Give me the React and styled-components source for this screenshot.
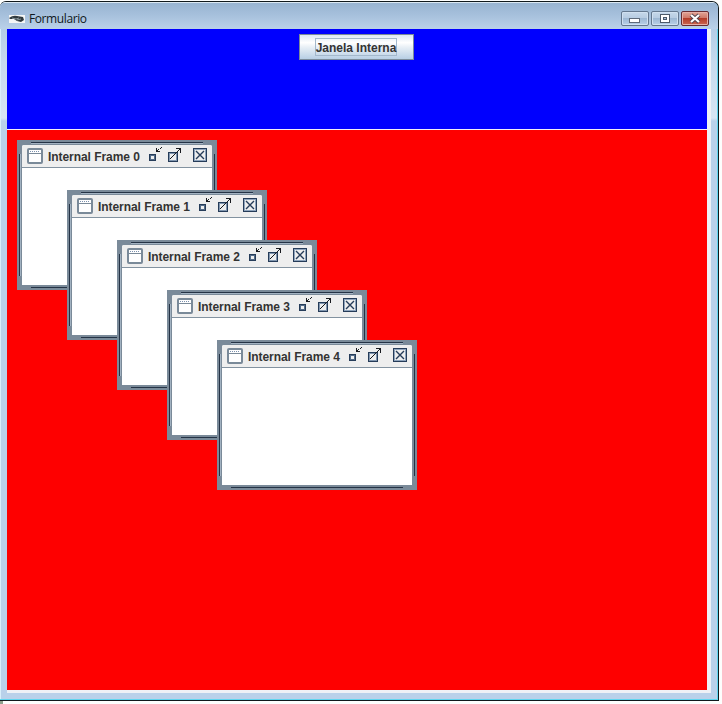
import React from "react";
import styled, { createGlobalStyle } from "styled-components";

const GlobalStyle = createGlobalStyle`
  * { box-sizing: border-box; }
  body { margin: 0; background: #fff; overflow: hidden; }
`;

const Screen = styled.div`
  width: 722px;
  height: 704px;
  padding-top: 1px;
  background: linear-gradient(90deg, #8fa08c 3px, transparent 3px) 0 701px / 100% 3px no-repeat #fdfefd;
`;

const Window = styled.div`
  display: flex;
  flex-direction: column;
  width: 719px;
  height: 700px;
  border: solid #10191c;
  border-width: 1px 1px 1px 0;
  border-radius: 6px 7px 0 0;
  background: linear-gradient(#9bb6d2, #b3cce6 26px, #c6daee 60px, #d6e5f3 116px, #b9d1ea 119px);
  box-shadow: inset -1px -1px #5fd5ef, inset 1px 1px #d9eefa;
`;

const TitleBar = styled.header`
  display: flex;
  align-items: center;
  flex: none;
  height: 27px;
  padding: 6px 9px 0 8px;
  border-radius: 6px 6px 0 0;
  background: linear-gradient(#dbe8f2 0 1px, #98b4d1 1px, #a5bfdb 12px, #b9d0e8 26px);
`;

const Caption = styled.span`
  flex: 1;
  margin-left: 3px;
  font: 12px/16px "Open Sans", "Noto Sans", sans-serif;
  letter-spacing: -0.4px;
  color: #101820;
`;

const WindowButtons = styled.div`
  display: flex;
  gap: 2px;
  margin-bottom: 1px;
`;

const WindowButton = styled.button`
  display: grid;
  place-items: center;
  width: 28px;
  height: 15px;
  padding: 0;
  border: 1px solid ${(p) => (p.$close ? "#672c32" : "#64788f")};
  border-radius: 2px;
  background: ${(p) =>
    p.$close
      ? "linear-gradient(#e2a496, #cf7868 45%, #b43d29 50%, #cb6551)"
      : "linear-gradient(#c6d8ea, #b7cce2 45%, #9eb8d3 50%, #b8d0e8)"};
  box-shadow: inset 0 0 0 1px ${(p) => (p.$close ? "#e6afa5" : "#d0e0f0")};
`;

const Client = styled.main`
  display: flex;
  flex-direction: column;
  width: 704px;
  height: 664px;
  margin-left: 7px;
  padding: 0 4px 3px 0;
  background: #eef1f6;
`;

const Toolbar = styled.section`
  display: flex;
  justify-content: center;
  align-items: flex-start;
  flex: none;
  height: 100px;
  padding: 5px 2px 0 0;
  background: #0000fe;
`;

const MetalButton = styled.button`
  width: 115px;
  height: 26px;
  padding: 0;
  border: 1px solid #7a8a99;
  background: linear-gradient(#dde8f3, #fff 32%, #e9f0f6 50%, #b8cfe5);
  font: bold 12px/16px "Liberation Sans", Arial, sans-serif;
  color: #333;
`;

const FocusLabel = styled.span`
  display: inline-block;
  height: 18px;
  border: 1px solid #a3b8cc;
  line-height: 18px;
  white-space: nowrap;
`;

const Desktop = styled.section`
  position: relative;
  flex: 1;
  margin-top: 1px;
  background: #fe0000;
  box-shadow: 0 -1px #f3eefa;
`;

const Frame = styled.article`
  position: absolute;
  isolation: isolate;
  left: ${(p) => 10 + p.$index * 50}px;
  top: ${(p) => 10 + p.$index * 50}px;
  width: 200px;
  height: 150px;
  padding: 5px;
  background: #7a8a99;

  &::before, &::after {
    content: "";
    position: absolute;
    pointer-events: none;
    border: solid #253345;
  }
  &::before {
    left: 14px;
    right: 14px;
    top: 2px;
    bottom: 2px;
    border-width: 1px 0;
    box-shadow: inset 0 1px #a3b3c2;
  }
  &::after {
    top: 14px;
    bottom: 14px;
    left: 2px;
    right: 2px;
    border-width: 0 1px;
    box-shadow: inset 1px 0 #a3b3c2;
  }
`;

const FrameBody = styled.div`
  position: relative;
  z-index: 1;
  height: 140px;
  background: #fff;
  border-radius: 2px 2px 0 0;
`;

const FrameTitle = styled.header`
  display: flex;
  height: 23px;
  padding-left: 5px;
  border-bottom: 1px solid #8292a0;
  border-radius: 2px 2px 0 0;
  background: #eee;
`;

const FrameName = styled.h2`
  width: 100px;
  margin: 4px 0 0 5px;
  font: bold 12px/16px "Liberation Sans", Arial, sans-serif;
  letter-spacing: -0.06px;
  color: #333;
  white-space: nowrap;
`;

const Icon = styled.svg`
  flex: none;
  display: block;
  margin-top: ${(p) => p.$top || 0}px;
  shape-rendering: ${(p) => (p.$smooth ? "auto" : "crispEdges")};
`;

function FrameControls() {
  return (
    <Icon width="60" height="18" viewBox="0 0 60 18" fill="none">
      <g stroke="#263c59">
        <path d="M1.5 9.5h6v6h-6z" />
        <path d="M2.5 10.5h4v4h-4z" stroke="#536b87" />
        <path d="M20.5 7.5h9v9h-9z" />
        <path d="M21.5 8.5h7v7h-7z" stroke="#8297b0" />
        <path d="M45.5 3.5h13v13h-13z" />
        <path d="M46.5 4.5h11v11h-11z" stroke="#8fa4bc" />
      </g>
      <path
        d="M8 3h1v3h3v1H8zM9 5h1v1h-1zM10 4h1v1h-1zM12 3h1v1h-1zM13 2h1v1h-1zM28 3h5v5h-1V4h-4zM31 4h1v1h-1zM30 5h1v1h-1zM29 6h1v1h-1zM28 7h1v1h-1zM27 8h1v1h-1zM26 9h1v1h-1zM25 10h1v1h-1zM24 11h1v1h-1zM23 12h1v1h-1zM22 13h1v1h-1z"
        fill="#17191e"
      />
      <path
        d="M48 6l8 8m0-8l-8 8"
        stroke="#263c59"
        strokeWidth="1.4"
        shapeRendering="auto"
      />
    </Icon>
  );
}

function InternalFrame({ index }) {
  return (
    <Frame $index={index}>
      <FrameBody>
        <FrameTitle>
          <Icon $top={3} width="16" height="16" viewBox="0 0 16 16" $smooth>
            <rect x="1" y="1" width="14" height="14" rx="1" fill="#fff" stroke="#7a8a99" strokeWidth="2" />
            <path d="M2 5.5h12" stroke="#7a8a99" />
            <path d="M3 3.5h10" stroke="#7c91ae" strokeDasharray="1 1" />
          </Icon>
          <FrameName>Internal Frame {index}</FrameName>
          <FrameControls />
        </FrameTitle>
      </FrameBody>
    </Frame>
  );
}

export default function App() {
  return (
    <>
      <GlobalStyle />
      <Screen>
        <Window>
          <TitleBar>
            <Icon width="18" height="10" viewBox="0 0 18 10" $smooth>
              <path d="M1 1h16v8H1z" fill="#f4f6f6" />
              <path d="M1 4Q5 1 9 2L15 3 16 6 13 8 9 7 6 5 2 5z" fill="#303a3e" />
              <path d="M4 4l4 1 3-1M9 6l4-1" stroke="#8b989c" fill="none" />
            </Icon>
            <Caption>Formulario</Caption>
            <WindowButtons>
              <WindowButton aria-label="Minimize">
                <Icon width="12" height="9">
                  <rect x="0.5" y="4.5" width="10" height="4" fill="#fff" stroke="#5f6b7a" />
                </Icon>
              </WindowButton>
              <WindowButton aria-label="Maximize">
                <Icon width="12" height="9">
                  <rect x="1.5" y="0.5" width="9" height="8" fill="#fff" stroke="#4d5a69" />
                  <rect x="4.5" y="3.5" width="3" height="2" fill="#aac2dc" stroke="#4d5a69" />
                </Icon>
              </WindowButton>
              <WindowButton aria-label="Close" $close>
                <Icon width="14" height="11" $smooth>
                  <path d="M3 2l8 7m0-7l-8 7" stroke="#51434c" strokeWidth="4" />
                  <path d="M3 2l8 7m0-7l-8 7" stroke="#fff" strokeWidth="2.2" />
                </Icon>
              </WindowButton>
            </WindowButtons>
          </TitleBar>
          <Client>
            <Toolbar>
              <MetalButton>
                <FocusLabel>Janela Interna</FocusLabel>
              </MetalButton>
            </Toolbar>
            <Desktop>
              {[0, 1, 2, 3, 4].map((index) => (
                <InternalFrame key={index} index={index} />
              ))}
            </Desktop>
          </Client>
        </Window>
      </Screen>
    </>
  );
}
